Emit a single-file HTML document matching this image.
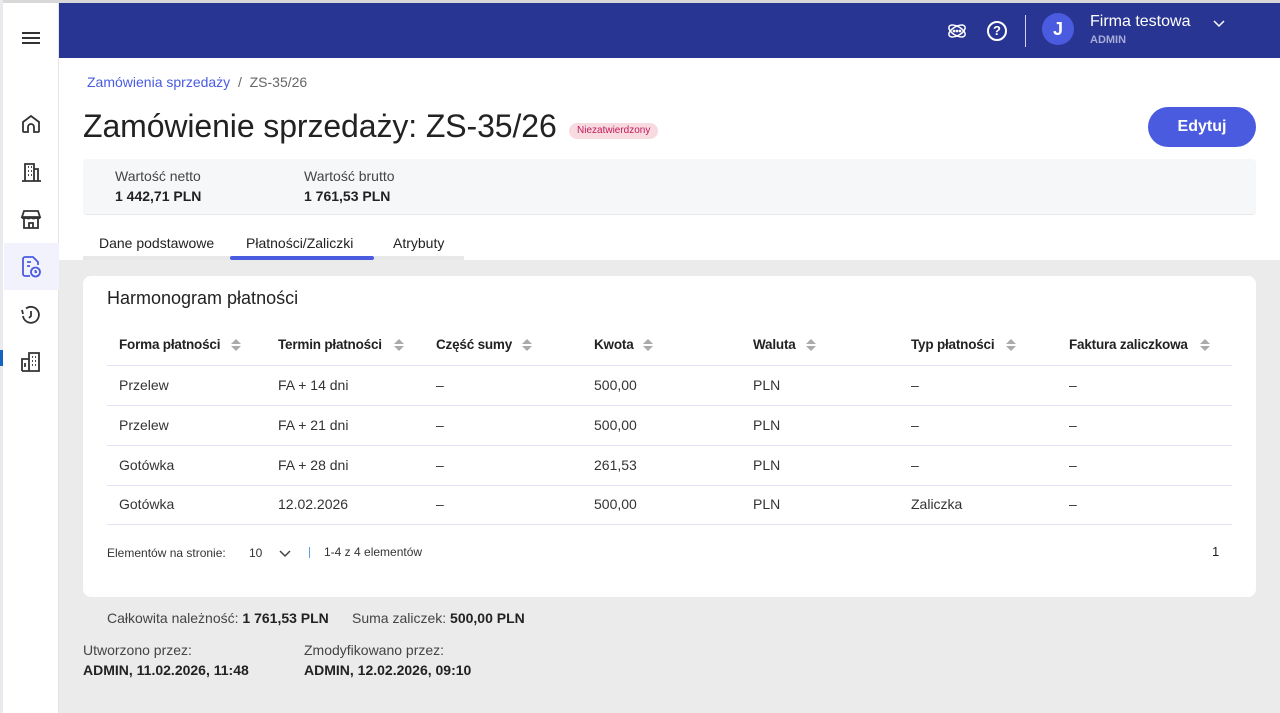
<!DOCTYPE html>
<html><head><meta charset="utf-8"><style>
*{margin:0;padding:0;box-sizing:border-box}
body{width:1280px;height:713px;overflow:hidden;background:#ebebeb;font-family:"Liberation Sans",sans-serif;color:#222;position:relative}
.a{position:absolute;white-space:nowrap}
.hdr{left:59px;top:3px;width:1221px;height:55px;background:#283593}
.side{left:3px;top:3px;width:56px;height:710px;background:#fff;border-right:1px solid #e4e4e4}
.top{left:59px;top:58px;width:1221px;height:202px;background:#fff}
.card{left:83px;top:276px;width:1173px;height:321px;background:#fff;border-radius:8px}
.th{top:337px;font-size:13.5px;font-weight:bold;color:#222;letter-spacing:-0.2px}
.td{font-size:14px;color:#333}
.line{left:107px;width:1125px;height:1px;background:#e3e1f5}
.sort{width:0;height:0;border-left:5px solid transparent;border-right:5px solid transparent}
</style></head><body>
<div class="a" style="left:0;top:0;width:1280px;height:3px;background:#d8d8d8"></div>
<div class="a" style="left:0;top:0;width:3px;height:713px;background:#e8eaed"></div>
<div class="a" style="left:0;top:350px;width:3px;height:16px;background:#1565c0"></div>
<div class="a side"></div>
<div class="a hdr"></div>
<div class="a top"></div>
<div class="a" style="left:22px;top:32px;width:18px;height:2px;background:#333;box-shadow:0 5px 0 #333,0 10px 0 #333"></div>
<svg class="a" style="left:19px;top:112px" width="24" height="24" viewBox="0 0 24 24" fill="none" stroke="#333" stroke-width="1.8"><path d="M4 10l8-6 8 6v9a1 1 0 0 1-1 1h-4v-5a3 3 0 0 0-6 0v5H5a1 1 0 0 1-1-1z"/></svg>
<svg class="a" style="left:19px;top:160px" width="24" height="24" viewBox="0 0 24 24" fill="none" stroke="#333" stroke-width="1.8"><path d="M6 21V4h9v17M15 9h4v12M3 21h19M9 7h1M12 7h1M9 11h1M12 11h1M9 15h1M12 15h1"/></svg>
<svg class="a" style="left:19px;top:207px" width="24" height="24" viewBox="0 0 24 24" fill="none" stroke="#333" stroke-width="1.8"><path d="M5 4h14l2 6H3zM3 10c0 2 4 2 4 0 0 2 5 2 5 0 0 2 5 2 5 0 0 2 4 2 4 0M5 12v9h14v-9M10 21v-5h4v5"/></svg>
<div class="a" style="left:4px;top:243px;width:55px;height:47px;background:#f2f2fc"></div>
<svg class="a" style="left:19px;top:255px" width="24" height="24" viewBox="0 0 24 24" fill="none" stroke="#4a5be0" stroke-width="1.8"><path d="M11 21H6a2 2 0 0 1-2-2V4a2 2 0 0 1 2-2h8l5 5v3M8 7h4M8 11h3"/><circle cx="16.5" cy="17" r="4.5"/><path d="M16.5 15v2.2h1.5"/></svg>
<svg class="a" style="left:19px;top:303px" width="24" height="24" viewBox="0 0 24 24" fill="none" stroke="#333" stroke-width="1.8"><path d="M4 13a8 8 0 1 0 3-7.5M12 8v5l-2 2"/><path d="M3 7l1 4"/></svg>
<svg class="a" style="left:19px;top:350px" width="24" height="24" viewBox="0 0 24 24" fill="none" stroke="#333" stroke-width="1.8"><path d="M3 21V9h7v12M10 21V3h10v18H3M13 7h1M16 7h1M13 11h1M16 11h1M13 15h1M16 15h1M6 13v4"/></svg>
<svg class="a" style="left:946px;top:20px" width="22" height="22" viewBox="0 0 22 22" fill="none" stroke="#fff" stroke-width="1.5"><ellipse cx="11" cy="11" rx="9" ry="4.5" transform="rotate(30 11 11)"/><ellipse cx="11" cy="11" rx="9" ry="4.5" transform="rotate(-30 11 11)"/><circle cx="8" cy="11" r=".6"/><circle cx="11" cy="11" r=".6"/><circle cx="14" cy="11" r=".6"/></svg>
<div class="a" style="left:987px;top:21px;width:20px;height:20px;border:2px solid #fff;border-radius:50%;color:#fff;font-size:13px;font-weight:bold;text-align:center;line-height:16px">?</div>
<div class="a" style="left:1025px;top:15px;width:1px;height:32px;background:#d0d4f0"></div>
<div class="a" style="left:1042px;top:13px;width:32px;height:32px;border-radius:50%;background:#4a5be0;color:#fff;font-size:18px;font-weight:bold;text-align:center;line-height:32px">J</div>
<div class="a" style="left:1090px;top:13px;font-size:16px;color:#fff">Firma testowa</div>
<div class="a" style="left:1090px;top:34px;font-size:11px;font-weight:bold;color:#a7acd8">ADMIN</div>
<svg class="a" style="left:1212px;top:19px" width="14" height="10" viewBox="0 0 14 10" fill="none" stroke="#fff" stroke-width="1.5"><path d="M2 2l5 5 5-5"/></svg>
<div class="a" style="left:87px;top:74px;font-size:14px;color:#4a5be0">Zamówienia sprzedaży <span style="color:#666">&nbsp;/&nbsp; ZS-35/26</span></div>
<div class="a" style="left:83px;top:108px;font-size:32px;color:#222;letter-spacing:-0.1px">Zamówienie sprzedaży: ZS-35/26</div>
<div class="a" style="left:569px;top:123px;height:16px;padding:0 8px;border-radius:8px;background:#f8dbe0;color:#c2185b;font-size:10px;line-height:16px">Niezatwierdzony</div>
<div class="a" style="left:1148px;top:107px;width:108px;height:40px;border-radius:20px;background:#4a5be0;color:#fff;font-size:16px;font-weight:bold;text-align:center;line-height:40px">Edytuj</div>
<div class="a" style="left:83px;top:159px;width:1173px;height:56px;background:#f6f7f9;border-radius:4px;border-bottom:1px solid #e8e8e8"></div>
<div class="a" style="left:115px;top:168px;font-size:14px;color:#444">Wartość netto</div>
<div class="a" style="left:115px;top:188px;font-size:14px;font-weight:bold">1 442,71 PLN</div>
<div class="a" style="left:304px;top:168px;font-size:14px;color:#444">Wartość brutto</div>
<div class="a" style="left:304px;top:188px;font-size:14px;font-weight:bold">1 761,53 PLN</div>
<div class="a" style="left:83px;top:256px;width:381px;height:4px;background:#e8e8e8"></div>
<div class="a" style="left:99px;top:235px;font-size:14px">Dane podstawowe</div>
<div class="a" style="left:246px;top:235px;font-size:14px">Płatności/Zaliczki</div>
<div class="a" style="left:393px;top:235px;font-size:14px">Atrybuty</div>
<div class="a" style="left:230px;top:256px;width:144px;height:4px;background:#4a5be0;border-radius:2px"></div>
<div class="a card"></div>
<div class="a" style="left:107px;top:288px;font-size:18px;color:#222">Harmonogram płatności</div>
<div class="a th" style="left:119px">Forma płatności</div>
<div class="a th" style="left:278px">Termin płatności</div>
<div class="a th" style="left:436px">Część sumy</div>
<div class="a th" style="left:594px">Kwota</div>
<div class="a th" style="left:753px">Waluta</div>
<div class="a th" style="left:911px">Typ płatności</div>
<div class="a th" style="left:1069px">Faktura zaliczkowa</div>
<div class="a" style="left:231px;top:339px"><div class="sort" style="border-bottom:5px solid #aaa"></div><div class="sort" style="border-top:5px solid #aaa;margin-top:2px"></div></div>
<div class="a" style="left:394px;top:339px"><div class="sort" style="border-bottom:5px solid #aaa"></div><div class="sort" style="border-top:5px solid #aaa;margin-top:2px"></div></div>
<div class="a" style="left:522px;top:339px"><div class="sort" style="border-bottom:5px solid #aaa"></div><div class="sort" style="border-top:5px solid #aaa;margin-top:2px"></div></div>
<div class="a" style="left:643px;top:339px"><div class="sort" style="border-bottom:5px solid #aaa"></div><div class="sort" style="border-top:5px solid #aaa;margin-top:2px"></div></div>
<div class="a" style="left:806px;top:339px"><div class="sort" style="border-bottom:5px solid #aaa"></div><div class="sort" style="border-top:5px solid #aaa;margin-top:2px"></div></div>
<div class="a" style="left:1006px;top:339px"><div class="sort" style="border-bottom:5px solid #aaa"></div><div class="sort" style="border-top:5px solid #aaa;margin-top:2px"></div></div>
<div class="a" style="left:1200px;top:339px"><div class="sort" style="border-bottom:5px solid #aaa"></div><div class="sort" style="border-top:5px solid #aaa;margin-top:2px"></div></div>
<div class="a line" style="top:365px"></div>
<div class="a line" style="top:405px"></div>
<div class="a line" style="top:445px"></div>
<div class="a line" style="top:485px"></div>
<div class="a line" style="top:524px"></div>
<div class="a td" style="left:119px;top:377px">Przelew</div><div class="a td" style="left:278px;top:377px">FA + 14 dni</div><div class="a td" style="left:436px;top:377px">–</div><div class="a td" style="left:594px;top:377px">500,00</div><div class="a td" style="left:753px;top:377px">PLN</div><div class="a td" style="left:911px;top:377px">–</div><div class="a td" style="left:1069px;top:377px">–</div>
<div class="a td" style="left:119px;top:417px">Przelew</div><div class="a td" style="left:278px;top:417px">FA + 21 dni</div><div class="a td" style="left:436px;top:417px">–</div><div class="a td" style="left:594px;top:417px">500,00</div><div class="a td" style="left:753px;top:417px">PLN</div><div class="a td" style="left:911px;top:417px">–</div><div class="a td" style="left:1069px;top:417px">–</div>
<div class="a td" style="left:119px;top:457px">Gotówka</div><div class="a td" style="left:278px;top:457px">FA + 28 dni</div><div class="a td" style="left:436px;top:457px">–</div><div class="a td" style="left:594px;top:457px">261,53</div><div class="a td" style="left:753px;top:457px">PLN</div><div class="a td" style="left:911px;top:457px">–</div><div class="a td" style="left:1069px;top:457px">–</div>
<div class="a td" style="left:119px;top:496px">Gotówka</div><div class="a td" style="left:278px;top:496px">12.02.2026</div><div class="a td" style="left:436px;top:496px">–</div><div class="a td" style="left:594px;top:496px">500,00</div><div class="a td" style="left:753px;top:496px">PLN</div><div class="a td" style="left:911px;top:496px">Zaliczka</div><div class="a td" style="left:1069px;top:496px">–</div>
<div class="a" style="left:107px;top:546px;font-size:12px;color:#333">Elementów na stronie:</div>
<div class="a" style="left:249px;top:546px;font-size:12px;color:#333">10</div>
<svg class="a" style="left:278px;top:549px" width="14" height="10" viewBox="0 0 14 10" fill="none" stroke="#444" stroke-width="1.5"><path d="M2 2l5 5 5-5"/></svg>
<div class="a" style="left:309px;top:547px;width:1px;height:11px;background:#5b9ee0"></div>
<div class="a" style="left:324px;top:545px;font-size:12px;color:#333">1-4 z 4 elementów</div>
<div class="a" style="left:1212px;top:544px;font-size:13px;color:#222">1</div>
<div class="a" style="left:107px;top:610px;font-size:14px;color:#444">Całkowita należność: <b style="color:#222">1 761,53 PLN</b></div>
<div class="a" style="left:352px;top:610px;font-size:14px;color:#444">Suma zaliczek: <b style="color:#222">500,00 PLN</b></div>
<div class="a" style="left:83px;top:642px;font-size:14px;color:#444">Utworzono przez:</div>
<div class="a" style="left:83px;top:662px;font-size:14px;font-weight:bold">ADMIN, 11.02.2026, 11:48</div>
<div class="a" style="left:304px;top:642px;font-size:14px;color:#444">Zmodyfikowano przez:</div>
<div class="a" style="left:304px;top:662px;font-size:14px;font-weight:bold">ADMIN, 12.02.2026, 09:10</div>
</body></html>
